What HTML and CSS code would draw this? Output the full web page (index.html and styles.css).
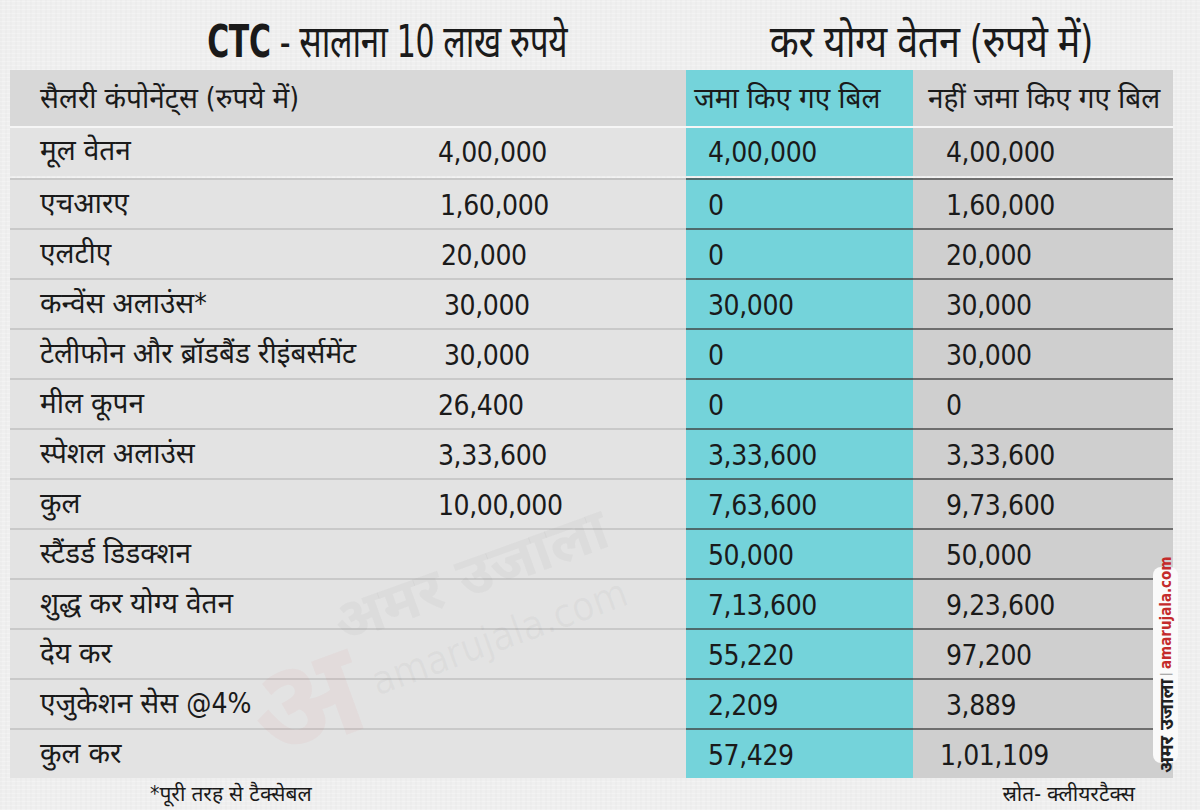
FILE: index.html
```html
<!DOCTYPE html>
<html lang="hi">
<head>
<meta charset="utf-8">
<link rel="stylesheet" href="styles.css">
</head>
<body>
<div class="page">
  <div class="titles">
    <div class="title title-left"><span class="tt tt-left"><b class="ctc">CTC</b> - सालाना 10 लाख रुपये</span></div>
    <div class="title title-right"><span class="tt">कर योग्य वेतन (रुपये में)</span></div>
  </div>
  <div class="table">
    <div class="hcell hleft">सैलरी कंपोनेंट्स (रुपये में)</div>
    <div class="hcell hteal">जमा किए गए बिल</div>
    <div class="hcell hgrey">नहीं जमा किए गए बिल</div>

    <div class="c lab first">मूल वेतन</div><div class="c num first">4,00,000</div><div class="c teal first">4,00,000</div><div class="c grey first">4,00,000</div>
    <div class="c lab">एचआरए</div><div class="c num n2">1,60,000</div><div class="c teal">0</div><div class="c grey">1,60,000</div>
    <div class="c lab">एलटीए</div><div class="c num n3">20,000</div><div class="c teal">0</div><div class="c grey">20,000</div>
    <div class="c lab">कन्वेंस अलाउंस*</div><div class="c num n4">30,000</div><div class="c teal">30,000</div><div class="c grey">30,000</div>
    <div class="c lab">टेलीफोन और ब्रॉडबैंड रीइंबर्समेंट</div><div class="c num n4">30,000</div><div class="c teal">0</div><div class="c grey">30,000</div>
    <div class="c lab">मील कूपन</div><div class="c num">26,400</div><div class="c teal">0</div><div class="c grey">0</div>
    <div class="c lab">स्पेशल अलाउंस</div><div class="c num">3,33,600</div><div class="c teal">3,33,600</div><div class="c grey">3,33,600</div>
    <div class="c lab">कुल</div><div class="c num">10,00,000</div><div class="c teal">7,63,600</div><div class="c grey">9,73,600</div>
    <div class="c lab">स्टैंडर्ड डिडक्शन</div><div class="c num"></div><div class="c teal">50,000</div><div class="c grey">50,000</div>
    <div class="c lab">शुद्ध कर योग्य वेतन</div><div class="c num"></div><div class="c teal">7,13,600</div><div class="c grey">9,23,600</div>
    <div class="c lab">देय कर</div><div class="c num"></div><div class="c teal">55,220</div><div class="c grey">97,200</div>
    <div class="c lab">एजुकेशन सेस @4%</div><div class="c num"></div><div class="c teal">2,209</div><div class="c grey">3,889</div>
    <div class="c lab">कुल कर</div><div class="c num"></div><div class="c teal">57,429</div><div class="c grey g-last">1,01,109</div>
  </div>
  <div class="foot">
    <div class="note">*पूरी तरह से टैक्सेबल</div>
    <div class="src">स्रोत- क्लीयरटैक्स</div>
  </div>

  <div class="wm">
    <span class="wm-a">अ</span>
    <span class="wm-name">अमर उजाला</span>
    <span class="wm-url">amarujala.com</span>
  </div>
  <div class="pill"><span class="pill-h">अमर उजाला</span><span class="pill-sep">|</span><span class="pill-url">amarujala.com</span></div>
</div>
</body>
</html>
```

FILE: styles.css
```css
* { box-sizing: border-box; }
html, body { margin: 0; padding: 0; }
body {
  width: 1200px;
  height: 810px;
  overflow: hidden;
  background: #eeeeee;
  font-family: "Liberation Sans Narrow", "DejaVu Sans Condensed", "Noto Sans Devanagari", "Lohit Devanagari", "Noto Sans", sans-serif;
  color: #1a1a1a;
}
.page {
  position: relative;
  width: 1200px;
  height: 810px;
  background:
    repeating-linear-gradient(90deg, rgba(0,0,0,0.012) 0 2px, transparent 2px 5px),
    repeating-linear-gradient(0deg, rgba(255,255,255,0.25) 0 1px, transparent 1px 4px),
    #efefef;
}
.titles {
  display: grid;
  grid-template-columns: 676px 487px;
  margin-left: 10px;
  height: 70px;
  align-items: center;
}
.title {
  font-size: 45px;
  text-align: center;
  padding-top: 14px;
  line-height: 48px;
  white-space: nowrap;
}
.tt {
  display: inline-block;
  transform: scaleX(0.84);
  letter-spacing: -0.5px;
}
.tt-left { transform: scaleX(0.74); }
.title-left { padding-left: 78px; }
.title-left .ctc { font-weight: bold; }
.title-right { font-weight: normal; padding-left: 4px; }

.table {
  margin-left: 10px;
  width: 1163px;
  display: grid;
  grid-template-columns: 428px 248px 227px 260px;
  grid-auto-rows: 50px;
  grid-template-rows: 58px;
  font-size: 28px;
}
.hcell {
  height: 58px;
  border-bottom: 2px solid #f6f6f6;
  display: flex;
  align-items: center;
  padding-top: 4px;
}
.hleft { grid-column: 1 / span 2; background: #d8d8d8; padding-left: 30px; }
.hteal { background: #74d3da; padding-left: 8px; }
.hgrey { background: #d3d3d3; padding-left: 15px; }

.c {
  height: 50px;
  display: flex;
  align-items: center;
  padding-top: 2px;
  border-top: 2px solid #c9c9c9;
  background: #e3e3e3;
  white-space: nowrap;
}
.c.first { border-top: 0; height: 48px; padding-top: 0; }
.lab { padding-left: 30px; }
.num { padding-left: 0; letter-spacing: -0.4px; }
.n2 { padding-left: 2px; }
.n3 { padding-left: 3px; }
.n4 { padding-left: 6px; }
.teal { background: #74d3da; border-top-color: #4f6a6c; padding-left: 22px; letter-spacing: -0.4px; }
.grey { background: #cfcfcf; border-top-color: #6e6e6e; padding-left: 33px; letter-spacing: -0.4px; }
.g-last { padding-left: 27px; }

.foot {
  display: flex;
  justify-content: space-between;
  padding: 2px 65px 0 150px;
  font-size: 21px;
  line-height: 28px;
}

.wm {
  position: absolute;
  left: 240px;
  top: 550px;
  width: 380px;
  height: 200px;
  pointer-events: none;
  transform: rotate(-20deg);
  white-space: nowrap;
}
.wm-a {
  position: absolute;
  left: 0;
  top: 30px;
  font-size: 130px;
  font-weight: bold;
  color: rgba(220, 80, 80, 0.05);
}
.wm-name {
  position: absolute;
  left: 110px;
  top: 10px;
  font-size: 58px;
  font-weight: bold;
  color: rgba(120, 120, 120, 0.06);
}
.wm-url {
  position: absolute;
  left: 125px;
  top: 88px;
  font-size: 40px;
  color: rgba(120, 120, 120, 0.06);
}

.pill {
  position: absolute;
  left: 1153px;
  top: 567px;
  width: 25px;
  height: 196px;
  background: #fafafa;
  border-radius: 8px;
  writing-mode: vertical-rl;
  transform: rotate(180deg);
  display: flex;
  align-items: center;
  justify-content: center;
  font-size: 19px;
  font-weight: bold;
  gap: 3px;
  white-space: nowrap;
}
.pill-h { color: #222; }
.pill-sep { color: #999; font-weight: normal; font-size: 12px; }
.pill-url { color: #c42b2b; font-size: 15px; }
```
